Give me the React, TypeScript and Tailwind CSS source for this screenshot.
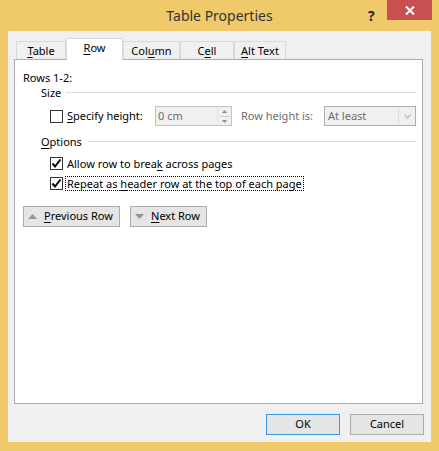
import React from "react";

const U = ({ children }: { children: React.ReactNode }) => (
  <span className="underline decoration-1 underline-offset-[2px]">{children}</span>
);

const CheckBox = ({ checked }: { checked: boolean }) => (
  <div className="w-[13px] h-[13px] border border-[#333333] bg-white flex items-center justify-center shrink-0">
    {checked && (
      <svg width="11" height="11" viewBox="0 0 11 11">
        <path d="M1.5 5.5 L4 8.5 L9.5 1.5" fill="none" stroke="#000" strokeWidth="2" />
      </svg>
    )}
  </div>
);

const Tab = ({ label, selected, w }: { label: React.ReactNode; selected?: boolean; w: string }) =>
  selected ? (
    <div className={`${w} h-[22px] bg-white border border-b-0 border-[#d9d9d9] -mb-px relative z-10 flex items-center justify-center pb-[2px]`}>
      {label}
    </div>
  ) : (
    <div className={`${w} h-[18px] bg-[#f0f0f0] border border-b-0 border-[#d9d9d9] flex items-center justify-center pt-[1px]`}>
      {label}
    </div>
  );

export default function App() {
  return (
    <div
      className="w-[439px] h-[451px] bg-[#f0c96b] flex flex-col text-[11px] text-black whitespace-nowrap"
      style={{ fontFamily: '"Segoe UI", "Noto Sans", sans-serif' }}
    >
      {/* Title bar */}
      <div className="h-[31px] relative flex items-center justify-center shrink-0">
        <span className="text-[14px] text-[#333333] pb-[1px]">Table Properties</span>
        <span className="absolute left-[368px] top-[5px] text-[14px] font-bold text-[#222]">?</span>
        <div className="absolute right-[7px] top-0 w-[45px] h-[20px] bg-[#c75050] flex items-center justify-center">
          <svg width="10" height="9" viewBox="0 0 10 9">
            <path d="M1 0.5 L9 8.5 M9 0.5 L1 8.5" stroke="#fff" strokeWidth="2" />
          </svg>
        </div>
      </div>

      {/* Client area */}
      <div className="flex-1 mx-[8px] mb-[9px] bg-[#f0f0f0] flex flex-col pl-[6px] pr-[8px] pt-[7px]">
        {/* Tabs */}
        <div className="flex items-end pl-[2px] h-[21px] shrink-0">
          <Tab w="w-[50px]" label={<span><U>T</U>able</span>} />
          <Tab w="w-[57px]" selected label={<span><U>R</U>ow</span>} />
          <Tab w="w-[57px]" label={<span>Col<U>u</U>mn</span>} />
          <Tab w="w-[54px]" label={<span>C<U>e</U>ll</span>} />
          <Tab w="w-[52px]" label={<span><U>A</U>lt Text</span>} />
        </div>

        {/* Panel */}
        <div className="h-[345px] bg-white border border-[#acacac] flex flex-col pl-[8px] pr-[6px] pt-[10px] shrink-0">
          <div className="h-[15px] leading-[15px]">Rows 1-2:</div>

          <div className="h-[15px] flex items-center ml-[18px]">
            <span className="leading-[15px]">Size</span>
            <div className="flex-1 h-px bg-[#dcdcdc] ml-[5px]" />
          </div>

          <div className="h-[20px] mt-[6px] flex items-center ml-[27px]">
            <CheckBox checked={false} />
            <span className="ml-[4px]"><U>S</U>pecify height:</span>
            <div className="ml-auto w-[77px] h-[20px] border border-[#c3c3c3] bg-[#f0f0f0] flex">
              <span className="flex-1 text-[#6d6d6d] pl-[2px] leading-[18px]">0 cm</span>
              <div className="w-[14px] border-l border-[#e3e3e3] flex flex-col items-center justify-center gap-[3px]">
                <svg width="5" height="3" viewBox="0 0 5 3"><path d="M0 3 L2.5 0 L5 3Z" fill="#8a8a8a" /></svg>
                <div className="w-[10px] h-px bg-[#d0d0d0]" />
                <svg width="5" height="3" viewBox="0 0 5 3"><path d="M0 0 L2.5 3 L5 0Z" fill="#8a8a8a" /></svg>
              </div>
            </div>
            <span className="ml-[9px] w-[83px] text-[#6d6d6d]">Row height is:</span>
            <div className="w-[92px] h-[20px] border border-[#adadad] bg-[#f0f0f0] flex">
              <span className="flex-1 text-[#6d6d6d] pl-[3px] leading-[18px]">At least</span>
              <div className="w-[17px] border-l border-[#dcdcdc] flex items-center justify-center">
                <svg width="7" height="5" viewBox="0 0 7 5">
                  <path d="M0.5 0.5 L3.5 4 L6.5 0.5" fill="none" stroke="#bcbcbc" strokeWidth="1.2" />
                </svg>
              </div>
            </div>
          </div>

          <div className="h-[15px] mt-[8px] flex items-center ml-[18px]">
            <span className="leading-[15px]"><U>O</U>ptions</span>
            <div className="flex-1 h-px bg-[#dcdcdc] ml-[6px]" />
          </div>

          <div className="h-[15px] mt-[7px] flex items-center ml-[27px]">
            <CheckBox checked />
            <span className="ml-[4px] leading-[15px]">Allow row to brea<U>k</U> across pages</span>
          </div>

          <div className="h-[15px] mt-[5px] flex items-center ml-[27px]">
            <CheckBox checked />
            <span className="ml-[2px] px-[1px] leading-[13px] border border-dotted border-[#000]">
              Repeat as <U>h</U>eader row at the top of each page
            </span>
          </div>

          <div className="mt-[15px] flex gap-[10px]">
            <div className="w-[97px] h-[21px] bg-[#e5e5e5] border border-[#acacac] flex items-center pl-[4px]">
              <svg width="9" height="5" viewBox="0 0 9 5"><path d="M0 5 L4.5 0 L9 5Z" fill="#959595" /></svg>
              <span className="ml-[7px]"><U>P</U>revious Row</span>
            </div>
            <div className="w-[77px] h-[21px] bg-[#e5e5e5] border border-[#acacac] flex items-center pl-[4px]">
              <svg width="9" height="5" viewBox="0 0 9 5"><path d="M0 0 L4.5 5 L9 0Z" fill="#959595" /></svg>
              <span className="ml-[7px]"><U>N</U>ext Row</span>
            </div>
          </div>
        </div>

        {/* Bottom buttons */}
        <div className="flex justify-end gap-[10px] pt-[10px] -mr-[1px]">
          <div className="w-[74px] h-[21px] bg-[#e5e5e5] border border-[#3c99e8] flex items-center justify-center">OK</div>
          <div className="w-[74px] h-[21px] bg-[#e5e5e5] border border-[#acacac] flex items-center justify-center">Cancel</div>
        </div>
      </div>
    </div>
  );
}
